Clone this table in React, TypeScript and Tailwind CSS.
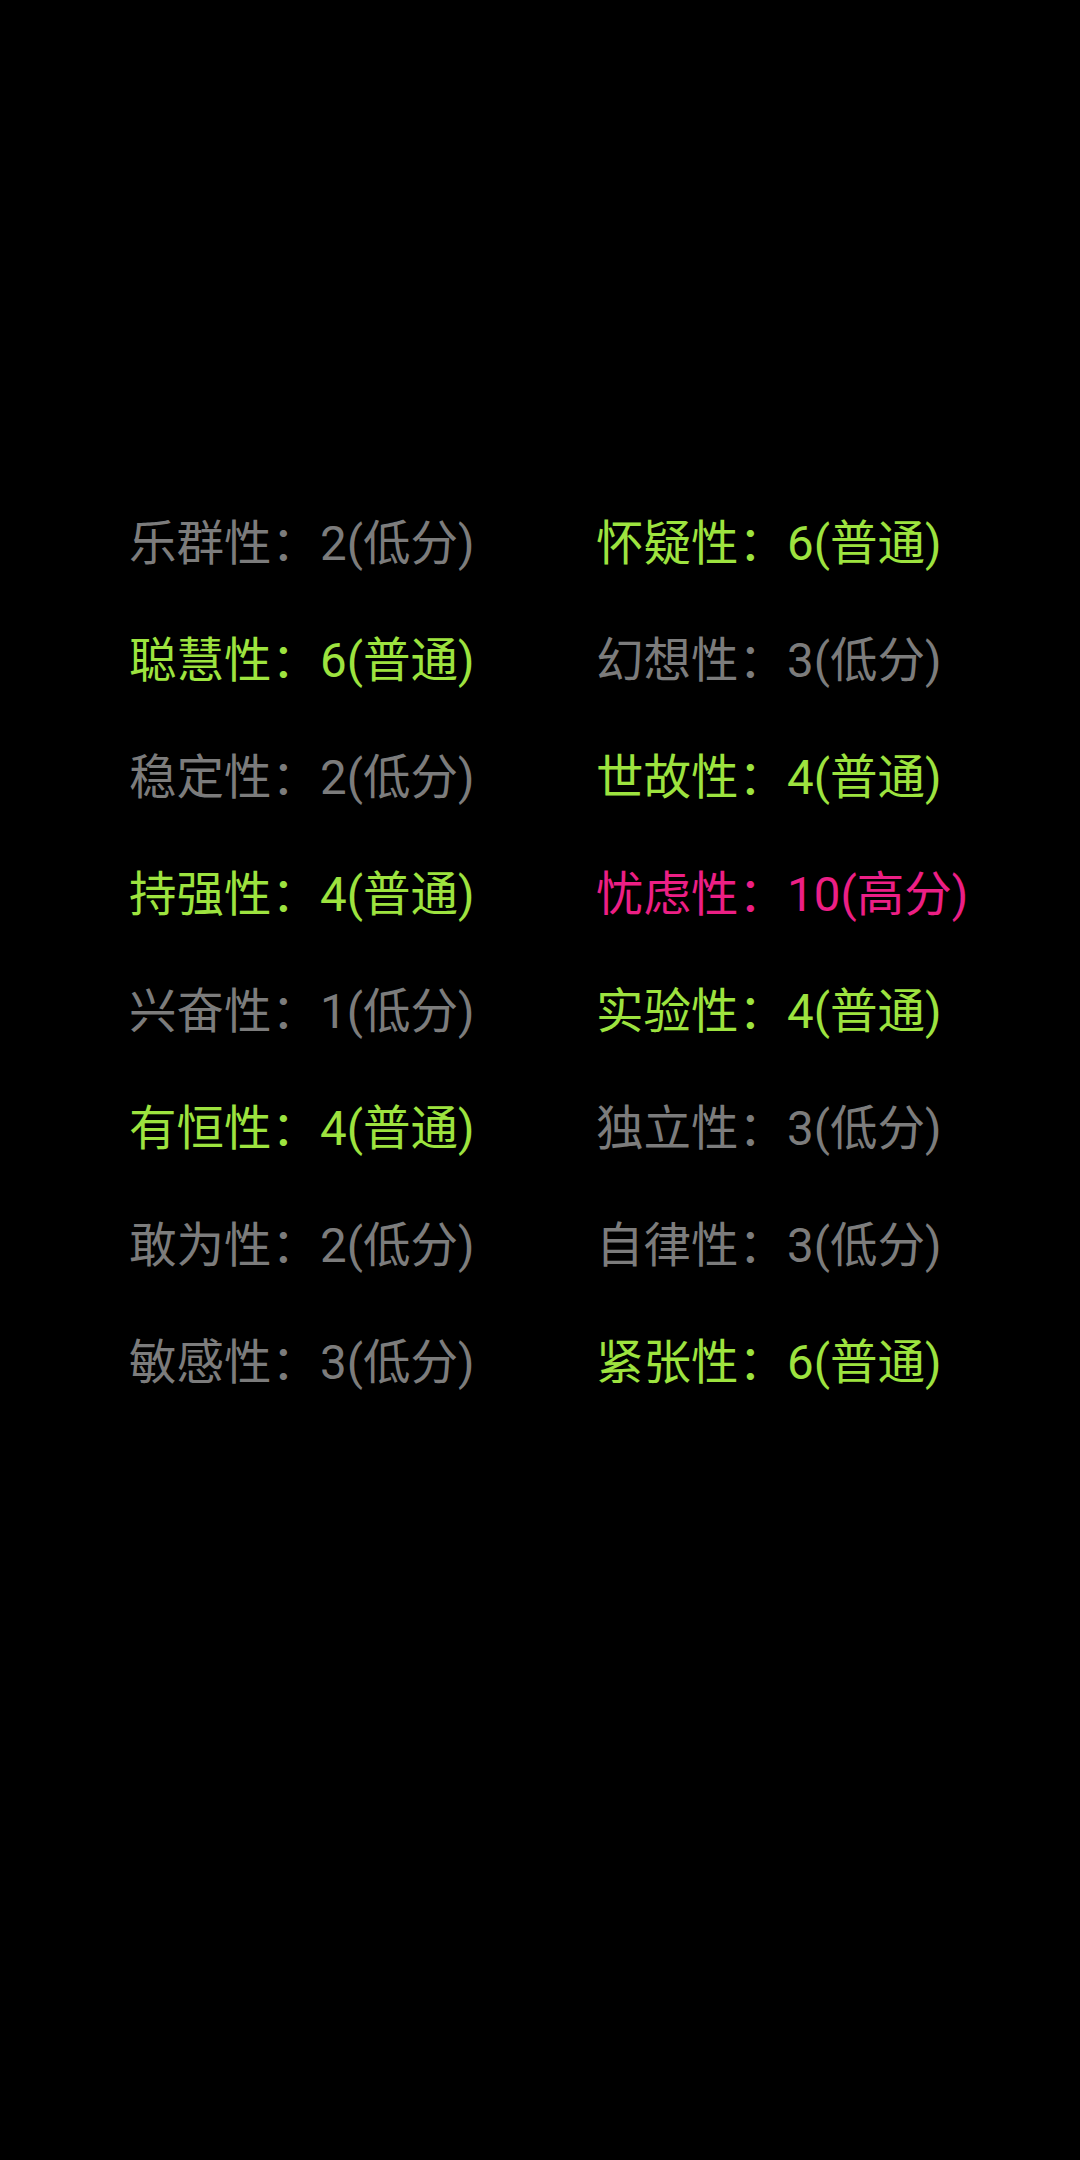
const GRAY = 'text-[#7c7c7c]';
const GREEN = 'text-[#9de33f]';
const PINK = 'text-[#ec1f85]';

type Trait = { name: string; score: number; level: string };

const traits: Trait[] = [
  { name: '乐群性', score: 2, level: '低分' },
  { name: '怀疑性', score: 6, level: '普通' },
  { name: '聪慧性', score: 6, level: '普通' },
  { name: '幻想性', score: 3, level: '低分' },
  { name: '稳定性', score: 2, level: '低分' },
  { name: '世故性', score: 4, level: '普通' },
  { name: '持强性', score: 4, level: '普通' },
  { name: '忧虑性', score: 10, level: '高分' },
  { name: '兴奋性', score: 1, level: '低分' },
  { name: '实验性', score: 4, level: '普通' },
  { name: '有恒性', score: 4, level: '普通' },
  { name: '独立性', score: 3, level: '低分' },
  { name: '敢为性', score: 2, level: '低分' },
  { name: '自律性', score: 3, level: '低分' },
  { name: '敏感性', score: 3, level: '低分' },
  { name: '紧张性', score: 6, level: '普通' },
];

function colorFor(level: string) {
  if (level === '高分') return PINK;
  if (level === '普通') return GREEN;
  return GRAY;
}

export default function App() {
  return (
    <div
      className="min-h-[2160px] w-[1080px] bg-black pt-[481px]"
      style={{ fontFamily: "Roboto, 'Noto Sans CJK SC', sans-serif" }}
    >
      <div className="grid grid-cols-[467px_1fr] pl-[129px]">
        {traits.map((t) => (
          <div key={t.name} className={`h-[117px] text-[47.5px] leading-[117px] whitespace-nowrap ${colorFor(t.level)}`}>
            <span style={{ fontFamily: "'Noto Sans CJK SC', sans-serif" }}>{t.name}：</span>
            <span className="ml-[1px]">{t.score}</span>({t.level})
          </div>
        ))}
      </div>
    </div>
  );
}
